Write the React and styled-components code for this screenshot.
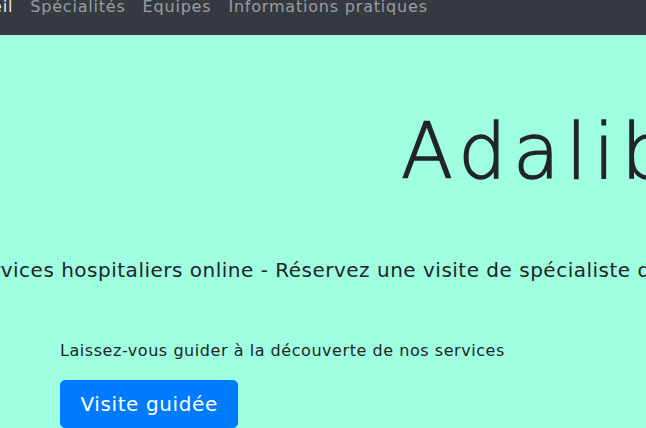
import React from "react";
import styled, { createGlobalStyle } from "styled-components";

const Global = createGlobalStyle`
  html, body { margin: 0; padding: 0; overflow: hidden; }
  body {
    background: #9ffde0;
    font-family: "DejaVu Sans", "Noto Sans", sans-serif;
    color: #212529;
  }
`;

/* the screenshot shows the page scrolled a little down and to the right */
const Page = styled.div`
  margin-top: -21px;
  width: 646px;
  height: 449px;
  overflow: hidden;
`;

const NavBar = styled.nav`
  background: #343a40;
  height: 56px;
  padding: 8px 0;
  box-sizing: border-box;
  display: flex;
  align-items: center;
  overflow: hidden;
`;

const NavList = styled.ul`
  list-style: none;
  display: flex;
  margin: 0 0 0 -58px;
  padding: 0;
  white-space: nowrap;
`;

const NavLink = styled.a`
  display: block;
  padding: 8px 8.5px;
  font-size: 16px;
  line-height: 24px;
  letter-spacing: 0.8px;
  color: ${(p) => (p.$active ? "rgba(255,255,255,0.92)" : "rgba(255,255,255,0.5)")};
  text-decoration: none;
`;

const Hero = styled.section`
  display: flex;
  flex-direction: column;
  align-items: flex-start;
  padding-top: 69px;
  white-space: nowrap;
`;

const Title = styled.h1`
  margin: 0 0 0 401px;
  font-size: 76px;
  font-weight: 300;
  line-height: 96px;
  letter-spacing: 6.5px;
  color: #212529;
  -webkit-text-stroke: 1.4px #212529;
`;

const Lead = styled.p`
  margin: 55px 0 0 -34px;
  font-size: 20px;
  line-height: 30px;
  font-weight: 400;
  letter-spacing: 0.5px;
  color: #212529;
`;

const Guide = styled.p`
  margin: 54px 0 0 60px;
  font-size: 16px;
  line-height: 24px;
  letter-spacing: 0.55px;
  color: #212529;
`;

const Button = styled.a`
  margin: 17px 0 0 60px;
  display: inline-block;
  padding: 8px 19.5px;
  font-size: 20px;
  line-height: 30px;
  letter-spacing: 0.6px;
  color: #fff;
  background: #007bff;
  border: 1px solid #007bff;
  border-radius: 5px;
  text-decoration: none;
`;

export default function App() {
  return (
    <Page>
      <Global />
      <NavBar>
        <NavList>
          <li><NavLink $active href="#">Accueil</NavLink></li>
          <li><NavLink href="#">Spécialités</NavLink></li>
          <li><NavLink href="#">Equipes</NavLink></li>
          <li><NavLink href="#">Informations pratiques</NavLink></li>
        </NavList>
      </NavBar>
      <Hero>
        <Title>Adalib</Title>
        <Lead>Services hospitaliers online - Réservez une visite de spécialiste de confiance</Lead>
        <Guide>Laissez-vous guider à la découverte de nos services</Guide>
        <Button href="#">Visite guidée</Button>
      </Hero>
    </Page>
  );
}
